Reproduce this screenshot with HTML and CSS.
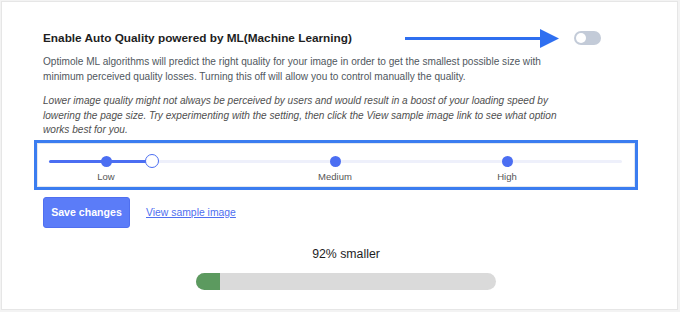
FILE: index.html
```html
<!DOCTYPE html>
<html>
<head>
<meta charset="utf-8">
<link rel="stylesheet" href="styles.css">
</head>
<body>
<div class="card">
  <div class="header">
    <h2 class="title">Enable Auto Quality powered by ML(Machine Learning)</h2>
    <svg class="arrow" width="154" height="19" viewBox="0 0 154 19">
      <line x1="0" y1="9.5" x2="138" y2="9.5" stroke="#2f6ff0" stroke-width="3"/>
      <polygon points="135,0 154,9.5 135,19" fill="#2f6ff0"/>
    </svg>
    <span class="toggle"><span class="knob"></span></span>
  </div>
  <p class="desc">Optimole ML algorithms will predict the right quality for your image in order to get the smallest possible size with minimum perceived quality losses. Turning this off will allow you to control manually the quality.</p>
  <p class="note">Lower image quality might not always be perceived by users and would result in a boost of your loading speed by lowering the page size. Try experimenting with the setting, then click the View sample image link to see what option works best for you.</p>
  <div class="highlight">
    <div class="slider">
      <div class="track">
        <div class="fill" style="width:103px"></div>
        <span class="dot" style="left:57px"></span>
        <span class="dot" style="left:286px"></span>
        <span class="dot" style="left:458px"></span>
        <span class="handle" style="left:103px"></span>
        <span class="label" style="left:57px">Low</span>
        <span class="label" style="left:286px">Medium</span>
        <span class="label" style="left:458px">High</span>
      </div>
    </div>
  </div>
  <div class="actions">
    <button class="save">Save changes</button>
    <a class="sample" href="#">View sample image</a>
  </div>
  <div class="result">
    <div class="saving"><span class="pct">92%</span> smaller</div>
    <div class="bar"><div class="bar-fill" style="width:24px"></div></div>
  </div>
</div>
</body>
</html>
```
FILE: styles.css
```css
* { box-sizing: border-box; }
html, body { margin: 0; padding: 0; }
body {
  background: #f3f3f3;
  font-family: "Liberation Sans", Arial, sans-serif;
  width: 680px;
  height: 312px;
  padding: 1px 2px 2px 1px;
}
.card {
  background: #fff;
  border: 1px solid #e6e6e6;
  height: 309px;
  padding: 26px 42px 0 41px;
}
.header {
  display: flex;
  align-items: center;
  height: 20px;
}
.title {
  margin: 0;
  flex: none;
  white-space: nowrap;
  font-size: 11.8px;
  font-weight: bold;
  color: #1e1e1e;
}
.arrow {
  margin-left: auto;
  display: block;
  flex: none;
}
.toggle {
  margin-left: 15px;
  margin-right: 34px;
  width: 27px;
  height: 14px;
  border-radius: 7px;
  background: #c3cbd8;
  position: relative;
  display: block;
  flex: none;
}
.knob {
  position: absolute;
  left: 2px;
  top: 2px;
  width: 10px;
  height: 10px;
  border-radius: 50%;
  background: #fff;
}
.desc, .note {
  margin: 0;
  max-width: 521px;
  font-size: 10.1px;
  color: #50575e;
}
.desc {
  margin-top: 6px;
  line-height: 15px;
}
.note {
  margin-top: 10px;
  line-height: 14.5px;
  font-style: italic;
  color: #4f4f4f;
}
.highlight {
  margin: 2px 0 0 -9px;
  width: 604px;
  height: 50px;
  border: 3px solid #3b7df0;
  box-shadow: inset 0 0 0 1px #e4e8ef;
  padding: 17px 13px 0 12px;
}
.track {
  position: relative;
  height: 3px;
  background: #eef0fb;
  border-radius: 2px;
}
.fill {
  height: 3px;
  background: #4b6ef2;
  border-radius: 2px;
}
.dot {
  position: absolute;
  top: -4px;
  width: 11px;
  height: 11px;
  margin-left: -5.5px;
  border-radius: 50%;
  background: #4b6ef2;
}
.handle {
  position: absolute;
  top: -5.5px;
  width: 14px;
  height: 14px;
  margin-left: -7px;
  border-radius: 50%;
  background: #fff;
  border: 1.5px solid #4b6ef2;
}
.label {
  position: absolute;
  top: 11px;
  transform: translateX(-50%);
  font-size: 9.5px;
  color: #555;
}
.actions {
  display: flex;
  align-items: center;
  margin-top: 7px;
}
.save {
  width: 87px;
  height: 31px;
  border: 1px solid #4f6ff0;
  border-radius: 3px;
  background: #5b7cf8;
  color: #fff;
  font-family: "Liberation Sans", Arial, sans-serif;
  font-weight: bold;
  font-size: 10.6px;
  padding: 0;
}
.sample {
  margin-left: 16px;
  font-size: 10.4px;
  color: #4f6ff0;
  text-decoration: underline;
}
.result {
  display: flex;
  flex-direction: column;
  align-items: center;
  margin-top: 18px;
  margin-left: 14px;
}
.saving {
  font-size: 12.3px;
  color: #1e1e1e;
  line-height: 16px;
}
.pct { font-weight: 500; }
.bar {
  margin-top: 11px;
  width: 300px;
  height: 17px;
  border-radius: 9px;
  background: #dadada;
  overflow: hidden;
}
.bar-fill {
  height: 100%;
  background: #5c9a5f;
}
```
